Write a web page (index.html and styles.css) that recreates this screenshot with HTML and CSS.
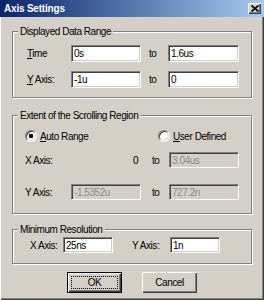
FILE: index.html
```html
<!DOCTYPE html>
<html lang="en">
<head>
  <meta charset="UTF-8" />
  <meta name="viewport" content="width=device-width, initial-scale=1.0" />
  <title>Axis Settings</title>
  <link rel="stylesheet" href="styles.css">
</head>
<body>
  <div class="window">
    <div class="titlebar">
      <span class="title">Axis Settings</span>
      <span class="close">
        <svg width="8" height="7" viewBox="0 0 8 7">
          <path d="M0.5 0.5 L7.5 6.5 M7.5 0.5 L0.5 6.5" stroke="#000" stroke-width="1.6" fill="none" />
        </svg>
      </span>
    </div>

    <div class="client">
      <fieldset class="group">
        <legend>Displayed Data Range</legend>
        <div class="range-grid">
          <label for="timeFrom"><u>T</u>ime</label>
          <input class="field" id="timeFrom" type="text" value="0s" />
          <span class="to">to</span>
          <input class="field" id="timeTo" type="text" value="1.6us" />

          <label for="yFrom"><u>Y</u> Axis:</label>
          <input class="field" id="yFrom" type="text" value="-1u" />
          <span class="to">to</span>
          <input class="field" id="yTo" type="text" value="0" />
        </div>
      </fieldset>

      <fieldset class="group group-scroll">
        <legend>Extent of the Scrolling Region</legend>
        <div class="radio-row">
          <label class="option option-first">
            <input type="radio" name="extent" checked />
            <span><u>A</u>uto Range</span>
          </label>
          <label class="option">
            <input type="radio" name="extent" />
            <span><u>U</u>ser Defined</span>
          </label>
        </div>
        <div class="scroll-grid row-x">
          <span>X Axis:</span>
          <span class="fixed">0</span>
          <span class="to">to</span>
          <input class="field" type="text" value="3.04us" disabled />
        </div>
        <div class="scroll-grid row-y">
          <span>Y Axis:</span>
          <input class="field" type="text" value="-1.5352u" disabled />
          <span class="to">to</span>
          <input class="field" type="text" value="727.2n" disabled />
        </div>
      </fieldset>

      <fieldset class="group group-res">
        <legend>Minimum Resolution</legend>
        <div class="res-row">
          <label class="res-label" for="resX">X Axis:</label>
          <input class="field" id="resX" type="text" value="25ns" />
          <label class="res-label res-label-y" for="resY">Y Axis:</label>
          <input class="field" id="resY" type="text" value="1n" />
        </div>
      </fieldset>

      <div class="buttons">
        <button class="btn btn-default">OK</button>
        <button class="btn">Cancel</button>
      </div>
    </div>
  </div>
</body>
</html>
```

FILE: styles.css
```css
* {
  box-sizing: border-box;
}
body {
  margin: 0;
  background: #d4d0c8;
}
.window {
  width: 264px;
  height: 300px;
  background: #d4d0c8;
  box-shadow: inset 1px 1px #ffffff, inset -1px -1px #404040, inset -2px -2px #808080;
  font-family: "Liberation Sans", Arial, sans-serif;
  font-size: 10px;
  letter-spacing: -0.45px;
  color: #000;
}
.titlebar {
  height: 17px;
  display: flex;
  align-items: center;
  justify-content: space-between;
  padding: 0 3px 0 4px;
  background: linear-gradient(to right, #0a246a, #a6caf0);
  color: #fff;
  font-weight: bold;
  letter-spacing: -0.2px;
}
.close {
  width: 13px;
  height: 11px;
  display: flex;
  align-items: center;
  justify-content: center;
  background: #d4d0c8;
  box-shadow: inset 1px 1px #ffffff, inset -1px -1px #404040, inset -2px -2px #808080;
}
.client {
  padding: 8px 12px 0;
}
.group {
  margin: 0;
  padding: 0;
  min-width: 0;
  border: 1px solid #808080;
  box-shadow: 1px 1px 0 #ffffff, inset 1px 1px 0 #ffffff;
}
.group legend {
  margin-left: 5px;
  padding: 0 2px;
  line-height: 13px;
  background: #d4d0c8;
}
.field {
  display: block;
  width: 100%;
  height: 16px;
  margin: 0;
  padding: 0 2px;
  border: 1px solid;
  border-color: #808080 #ffffff #ffffff #808080;
  box-shadow: inset 1px 1px #404040, inset -1px -1px #d4d0c8;
  background: #fff;
  font: inherit;
  letter-spacing: inherit;
  color: #000;
  outline: none;
}
.field:disabled {
  background: #d4d0c8;
  color: #8a8a8a;
}
.to {
  padding-left: 8px;
}

/* displayed data range */
.range-grid {
  display: grid;
  grid-template-columns: 44px 70px 27px 71px;
  grid-auto-rows: 17px;
  row-gap: 9px;
  align-items: center;
  padding: 7px 11px 9px 14px;
}
.range-grid .field {
  height: 17px;
}

/* scrolling region */
.group-scroll {
  margin-top: 11px;
}
.radio-row {
  display: flex;
  align-items: center;
  height: 16px;
  margin: 6px 0 0 12px;
}
.option {
  display: flex;
  align-items: center;
  gap: 3px;
}
.option-first {
  width: 133px;
}
.option input {
  appearance: none;
  -webkit-appearance: none;
  width: 12px;
  height: 12px;
  margin: 0;
  border-radius: 50%;
  border: 1px solid;
  border-color: #808080 #ffffff #ffffff #808080;
  box-shadow: inset 1px 1px #404040, inset -1px -1px #d4d0c8;
  background: #fff;
}
.option input:checked {
  background: radial-gradient(circle, #000 0 2px, #fff 2.5px);
}
.scroll-grid {
  display: grid;
  grid-template-columns: 46px 70px 28px 70px;
  height: 16px;
  align-items: center;
  padding-left: 12px;
}
.scroll-grid .to {
  padding-left: 11px;
}
.row-x {
  margin-top: 8px;
}
.row-y {
  margin-top: 16px;
  margin-bottom: 13px;
}
.fixed {
  text-align: right;
  padding-right: 3px;
}

/* minimum resolution */
.group-res {
  margin-top: 9px;
}
.res-row {
  display: flex;
  align-items: center;
  padding: 1px 0 10px 17px;
}
.res-row .field {
  width: 50px;
}
.res-label {
  width: 33px;
}
.res-label-y {
  width: 38px;
  margin-left: 19px;
}

/* buttons */
.buttons {
  display: flex;
  justify-content: center;
  gap: 20px;
  margin-top: 8px;
}
.btn {
  width: 55px;
  height: 21px;
  padding: 0;
  border: none;
  background: #d4d0c8;
  box-shadow: inset 1px 1px #ffffff, inset -1px -1px #404040, inset -2px -2px #808080;
  font: inherit;
  letter-spacing: inherit;
  color: #000;
}
.btn-default {
  border: 1px solid #000;
  outline: 1px dotted #000;
  outline-offset: -5px;
}
```
